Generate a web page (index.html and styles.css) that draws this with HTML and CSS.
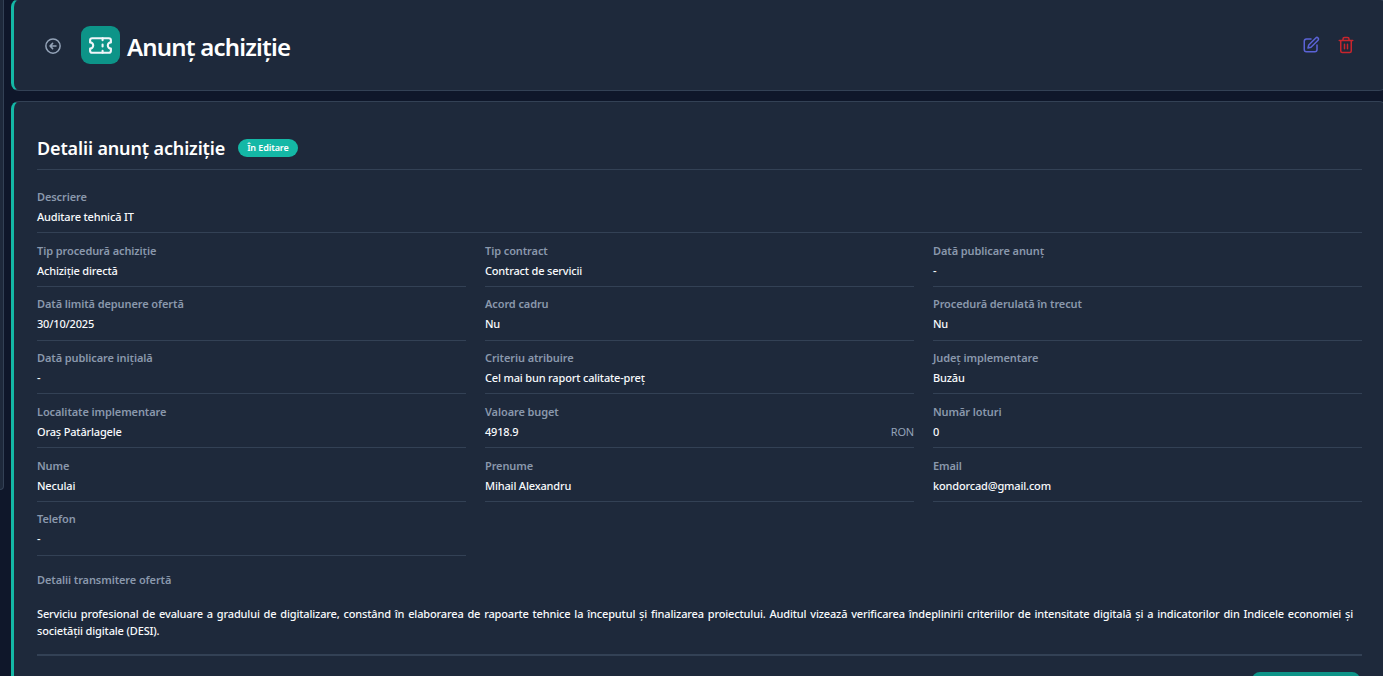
FILE: index.html
```html
<!DOCTYPE html>
<html lang="ro">
<head>
<meta charset="utf-8">
<title>Anunț achiziție</title>
<link rel="stylesheet" href="styles.css">
</head>
<body>
<div class="shell">
  <aside class="rail"></aside>
  <main class="main">
    <header class="card head">
      <button class="back" aria-label="Înapoi">
        <svg viewBox="0 0 24 24" width="18" height="18" fill="none" stroke="currentColor" stroke-width="2" stroke-linecap="round" stroke-linejoin="round"><circle cx="12" cy="12" r="9.5"/><path d="M16 12H8M11.5 8.5 8 12l3.5 3.5"/></svg>
      </button>
      <span class="logo">
        <svg viewBox="0 0 24 24" width="25" height="25" fill="none" stroke="currentColor" stroke-width="2" stroke-linecap="round" stroke-linejoin="round"><path d="M2 9a3 3 0 0 1 0 6v2a2 2 0 0 0 2 2h16a2 2 0 0 0 2-2v-2a3 3 0 0 1 0-6V7a2 2 0 0 0-2-2H4a2 2 0 0 0-2 2Z"/><path d="M14 5v2M14 11v2M14 17v2"/></svg>
      </span>
      <h1 class="title">Anunț achiziție</h1>
      <div class="actions">
        <svg class="edit" viewBox="0 0 24 24" width="18" height="18" fill="none" stroke="currentColor" stroke-width="2" stroke-linecap="round" stroke-linejoin="round"><path d="M12 4H6a3 3 0 0 0-3 3v11a3 3 0 0 0 3 3h11a3 3 0 0 0 3-3v-6"/><path d="M18.4 2.6a2.1 2.1 0 0 1 3 3L12 15l-4 1 1-4Z"/></svg>
        <svg class="trash" viewBox="0 0 24 24" width="18" height="18" fill="none" stroke="currentColor" stroke-width="2" stroke-linecap="round" stroke-linejoin="round"><path d="M3 6h18M19 6v14a2 2 0 0 1-2 2H7a2 2 0 0 1-2-2V6M8 6V4a2 2 0 0 1 2-2h4a2 2 0 0 1 2 2v2M10 11v6M14 11v6"/></svg>
      </div>
    </header>
    <section class="card body">
      <div class="sec-head">
        <h2 class="sec-title">Detalii anunț achiziție</h2>
        <span class="badge">În Editare</span>
      </div>
      <div class="field wide"><div class="label">Descriere</div><div class="value">Auditare tehnică IT</div></div>
      <div class="grid">
        <div class="field"><div class="label">Tip procedură achiziție</div><div class="value">Achiziție directă</div></div>
        <div class="field"><div class="label">Tip contract</div><div class="value">Contract de servicii</div></div>
        <div class="field"><div class="label">Dată publicare anunț</div><div class="value">-</div></div>
        <div class="field"><div class="label">Dată limită depunere ofertă</div><div class="value">30/10/2025</div></div>
        <div class="field"><div class="label">Acord cadru</div><div class="value">Nu</div></div>
        <div class="field"><div class="label">Procedură derulată în trecut</div><div class="value">Nu</div></div>
        <div class="field"><div class="label">Dată publicare inițială</div><div class="value">-</div></div>
        <div class="field"><div class="label">Criteriu atribuire</div><div class="value">Cel mai bun raport calitate-preţ</div></div>
        <div class="field"><div class="label">Județ implementare</div><div class="value">Buzău</div></div>
        <div class="field"><div class="label">Localitate implementare</div><div class="value">Oraş Patârlagele</div></div>
        <div class="field"><div class="label">Valoare buget</div><div class="value split"><span>4918.9</span><span class="unit">RON</span></div></div>
        <div class="field"><div class="label">Număr loturi</div><div class="value">0</div></div>
        <div class="field"><div class="label">Nume</div><div class="value">Neculai</div></div>
        <div class="field"><div class="label">Prenume</div><div class="value">Mihail Alexandru</div></div>
        <div class="field"><div class="label">Email</div><div class="value">kondorcad@gmail.com</div></div>
        <div class="field"><div class="label">Telefon</div><div class="value">-</div></div>
      </div>
      <div class="details">
        <div class="label">Detalii transmitere ofertă</div>
        <p class="text">Serviciu profesional de evaluare a gradului de digitalizare, constând în elaborarea de rapoarte tehnice la începutul și finalizarea proiectului. Auditul vizează verificarea îndeplinirii criteriilor de intensitate digitală și a indicatorilor din Indicele economiei și societății digitale (DESI).</p>
      </div>
      <div class="foot"><button class="cta" aria-label="Acțiune"></button></div>
    </section>
  </main>
</div>
</body>
</html>
```
FILE: styles.css
```css
* { box-sizing: border-box; }
html, body { margin: 0; height: 100%; overflow: hidden; }
body { background: #0f172a; font-family: "Noto Sans", sans-serif; color: #f1f5f9; }
.shell { display: flex; width: 1400px; align-items: flex-start; }
.rail { width: 4px; height: 490px; margin-right: 7px; background: #1e293b; border: 1px solid #334155; border-left: 0; border-top: 0; border-radius: 0 0 6px 0; flex: none; }
.main { width: 1376px; flex: none; display: flex; flex-direction: column; gap: 10px; margin-top: -1px; }
.card { background: #1e293b; border: 1px solid #334155; border-left: 3px solid #14b8a6; border-radius: 8px; }
.head { height: 92px; display: flex; align-items: center; padding: 0 31px 0 30px; }
.back { background: none; border: 0; padding: 0; color: #94a3b8; display: flex; margin: 2px 19px 0 0; }
.logo { width: 39px; height: 38px; border-radius: 9px; background: #0d9488; color: #f1f5f9; display: flex; align-items: center; justify-content: center; margin-right: 7px; }
.title { margin: 3px 0 0; font-size: 24px; font-weight: 600; letter-spacing: -0.8px; color: #fff; line-height: 1; }
.actions { margin-left: auto; display: flex; gap: 17px; }
.edit { color: #5b63d6; }
.trash { color: #c9252d; }
.body { padding: 32px 24px 0 23px; height: 640px; }
.sec-head { display: flex; align-items: center; gap: 13px; height: 36px; padding-bottom: 8px; border-bottom: 1px solid #334155; margin-bottom: 19px; }
.sec-title { margin: 0; font-size: 18px; font-weight: 600; letter-spacing: -0.14px; color: #fff; }
.badge { background: #14b8a6; color: #fff; font-size: 9px; font-weight: 600; letter-spacing: -0.1px; line-height: 18px; padding: 0 9px; border-radius: 9px; }
.grid { display: grid; grid-template-columns: repeat(3, 429px); column-gap: 19px; }
.field { height: 44.3px; border-bottom: 1px solid #334155; margin-bottom: 9.45px; }
.wide { margin-bottom: 9.4px; }
.label { font-size: 11px; font-weight: 600; letter-spacing: -0.1px; line-height: 16px; color: #8a98ac; }
.value { font-size: 11px; font-weight: 500; letter-spacing: -0.17px; line-height: 16px; margin-top: 4px; color: #f8fafc; }
.split { display: flex; justify-content: space-between; }
.unit { color: #94a3b8; font-weight: 400; }
.details { margin-top: 7px; }
.text { margin: 16.5px 9px 0 0; font-size: 11px; font-weight: 500; letter-spacing: -0.15px; line-height: 17px; color: #f8fafc; text-align: justify; }
.foot { margin-top: 15.5px; border-top: 2px solid #334155; display: flex; justify-content: flex-end; padding: 16px 2px 0 0; }
.cta { width: 108px; height: 36px; border: 0; border-radius: 8px; background: #0d9488; }
```
